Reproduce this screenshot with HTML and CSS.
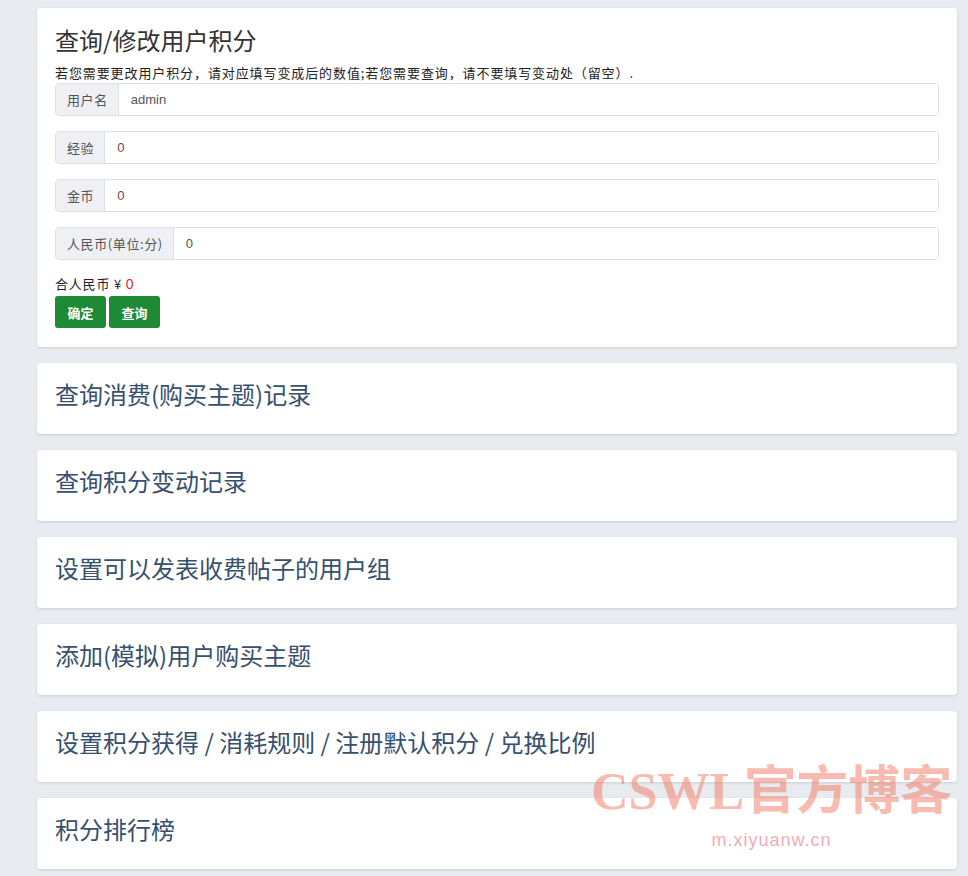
FILE: index.html
```html
<!DOCTYPE html>
<html lang="zh-CN">
<head>
  <meta charset="UTF-8">
  <title>积分管理</title>
  <link rel="stylesheet" href="styles.css">
</head>
<body>
  <div class="page">
    <div class="card">
      <h2 class="card-title dark">查询/修改用户积分</h2>
      <p class="tip">若您需要更改用户积分，请对应填写变成后的数值;若您需要查询，请不要填写变动处（留空）.</p>
      <div class="input-group">
        <span class="addon">用户名</span>
        <input type="text" value="admin">
      </div>
      <div class="input-group">
        <span class="addon">经验</span>
        <input type="text" value="0">
      </div>
      <div class="input-group">
        <span class="addon">金币</span>
        <input type="text" value="0">
      </div>
      <div class="input-group">
        <span class="addon">人民币(单位:分)</span>
        <input type="text" value="0">
      </div>
      <div class="rmb">合人民币 ¥ <span class="red">0</span></div>
      <div class="btns">
        <button class="btn">确定</button>
        <button class="btn">查询</button>
      </div>
    </div>
    <div class="card"><h2 class="card-title">查询消费(购买主题)记录</h2></div>
    <div class="card"><h2 class="card-title">查询积分变动记录</h2></div>
    <div class="card"><h2 class="card-title">设置可以发表收费帖子的用户组</h2></div>
    <div class="card"><h2 class="card-title">添加(模拟)用户购买主题</h2></div>
    <div class="card"><h2 class="card-title">设置积分获得 / 消耗规则 / 注册默认积分 / 兑换比例</h2></div>
    <div class="card"><h2 class="card-title">积分排行榜</h2></div>
  </div>
  <div class="watermark">
    <div class="wm-big">CSWL官方博客</div>
    <div class="wm-small">m.xiyuanw.cn</div>
  </div>
</body>
</html>
```

FILE: styles.css
```css
body {
  margin: 0;
  background-color: #e8ebef;
  font-family: "Noto Sans CJK SC", "Liberation Sans", sans-serif;
  color: #333;
}
.page {
  padding: 8px 11px 8px 37px;
}
.card {
  background: #fff;
  border-radius: 4px;
  box-shadow: 0 1px 3px rgba(0, 0, 0, 0.12);
  padding: 16px 18px 26px;
  margin-bottom: 16px;
}
.card:first-child {
  padding: 17px 18px 19px;
}
.card-title {
  margin: 0;
  font-size: 24px;
  font-weight: 400;
  line-height: 29px;
  color: #36506e;
}
.card-title.dark {
  color: #333;
}
.tip {
  margin: 10px 0 2px;
  font-size: 13px;
  letter-spacing: 0.9px;
  line-height: 17px;
  color: #222;
}
.input-group {
  display: flex;
  height: 33px;
  border: 1px solid #dcdfe3;
  border-radius: 4px;
  box-sizing: border-box;
  margin-bottom: 15px;
  overflow: hidden;
}
.addon {
  display: flex;
  align-items: center;
  padding: 0 10px 0 11px;
  background: #eef0f3;
  border-right: 1px solid #dcdfe3;
  font-size: 13px;
  letter-spacing: 0.6px;
  color: #555;
}
.input-group input {
  flex: 1;
  border: none;
  outline: none;
  padding: 0 12px;
  font-family: "Liberation Sans", "Noto Sans CJK SC", sans-serif;
  font-size: 13px;
  color: #555;
}
.rmb {
  margin-top: 8px;
  font-size: 13px;
  letter-spacing: 0.8px;
  line-height: 18px;
  color: #222;
}
.red {
  color: #e81f2c;
  font-family: "Liberation Sans", sans-serif;
  font-size: 14px;
}
.btns {
  display: flex;
  gap: 3px;
  margin-top: 3px;
}
.btn {
  width: 51px;
  height: 32px;
  border: none;
  border-radius: 3px;
  background: #1e8a36;
  color: #fff;
  font-family: "Noto Sans CJK SC", sans-serif;
  font-weight: 700;
  font-size: 13px;
  padding: 0;
}
.watermark {
  position: absolute;
  left: 591px;
  top: 762px;
  pointer-events: none;
  text-align: center;
}
.wm-big {
  font-family: "Liberation Serif", "Noto Sans CJK SC", serif;
  font-weight: 700;
  font-size: 52px;
  line-height: 60px;
  color: rgba(244, 120, 95, 0.5);
  white-space: nowrap;
}
.wm-small {
  margin-top: 8px;
  font-family: "Liberation Sans", sans-serif;
  font-size: 18px;
  color: rgba(225, 100, 110, 0.55);
  letter-spacing: 1px;
}
```
